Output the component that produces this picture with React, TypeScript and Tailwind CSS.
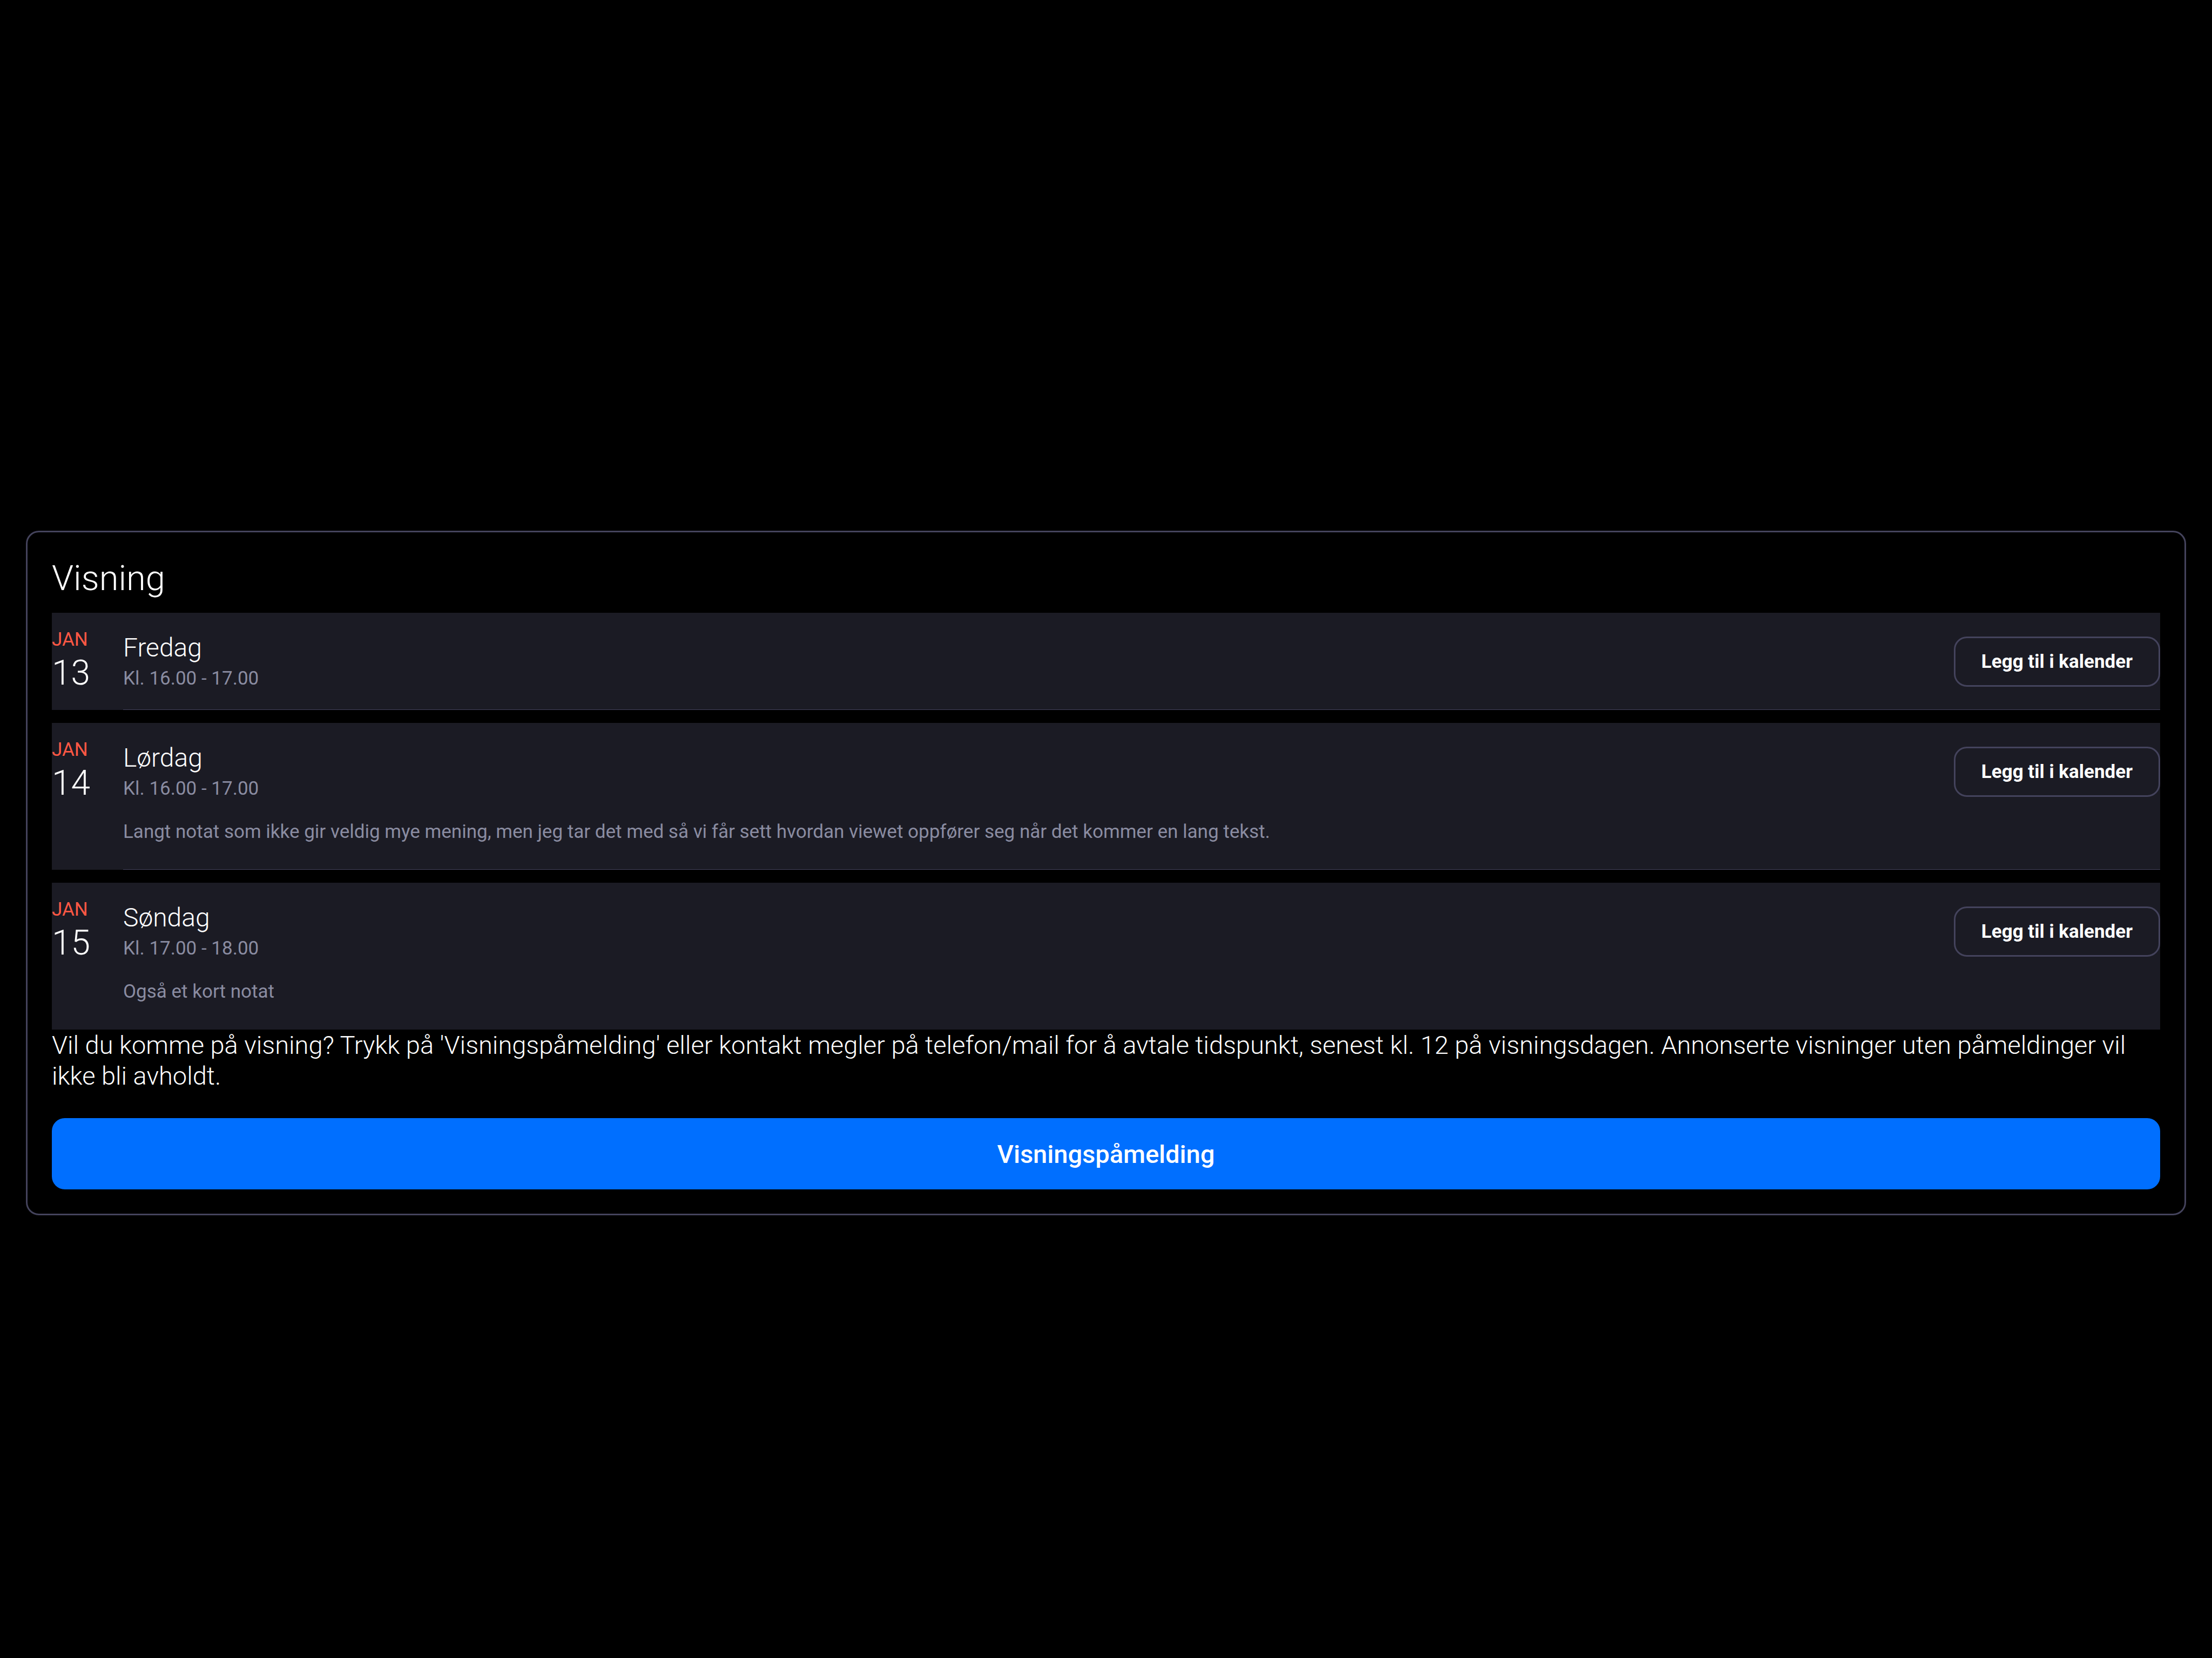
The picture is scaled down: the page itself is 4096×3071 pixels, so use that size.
type Viewing = {
  month: string;
  date: string;
  weekday: string;
  time: string;
  note?: string;
};

const viewings: Viewing[] = [
  { month: 'JAN', date: '13', weekday: 'Fredag', time: 'Kl. 16.00 - 17.00' },
  {
    month: 'JAN',
    date: '14',
    weekday: 'Lørdag',
    time: 'Kl. 16.00 - 17.00',
    note: 'Langt notat som ikke gir veldig mye mening, men jeg tar det med så vi får sett hvordan viewet oppfører seg når det kommer en lang tekst.',
  },
  {
    month: 'JAN',
    date: '15',
    weekday: 'Søndag',
    time: 'Kl. 17.00 - 18.00',
    note: 'Også et kort notat',
  },
];

function ViewingRow({ viewing }: { viewing: Viewing }) {
  return (
    <li className="group flex bg-[#1b1b24]">
      <div className="w-33 shrink-0 pt-[30px]">
        <div className="text-[35px] leading-10 font-normal text-[#ff5844]">{viewing.month}</div>
        <div className="text-[64px] leading-[84px]">{viewing.date}</div>
      </div>
      <div className="flex grow items-start justify-between border-b border-[#44435c] pb-9 group-last:border-transparent">
        <div className="pt-9">
          <h2 className="text-[48px] leading-[57px]">{viewing.weekday}</h2>
          <p className="mt-2 text-[35px] leading-[42px] font-normal text-[#8a8ca1]">{viewing.time}</p>
          {viewing.note && (
            <p className="mt-[38px] pb-3 text-[35px] leading-[42px] font-normal text-[#8a8ca1]">{viewing.note}</p>
          )}
        </div>
        <button
          type="button"
          className="mt-11 h-[93px] shrink-0 rounded-3xl border-3 border-[#44435c] px-12 text-[35px] leading-[42px] font-bold"
        >
          Legg til i kalender
        </button>
      </div>
    </li>
  );
}

export default function App() {
  return (
    <main className="min-h-screen bg-black px-12 pt-[983px] font-['Roboto',sans-serif] font-light text-white">
      <section className="rounded-3xl border-3 border-[#44435c] p-[45px]">
        <h1 className="mb-6 text-[65px] leading-20">Visning</h1>
        <ul className="flex flex-col gap-6">
          {viewings.map((viewing) => (
            <ViewingRow key={viewing.date} viewing={viewing} />
          ))}
        </ul>
        <p className="text-[47px] leading-[57px]">
          Vil du komme på visning? Trykk på 'Visningspåmelding' eller kontakt megler på telefon/mail for å avtale
          tidspunkt, senest kl. 12 på visningsdagen. Annonserte visninger uten påmeldinger vil ikke bli avholdt.
        </p>
        <button
          type="button"
          className="mt-[50px] h-33 w-full rounded-3xl bg-[#006fff] text-[47px] leading-[57px] font-medium"
        >
          Visningspåmelding
        </button>
      </section>
    </main>
  );
}
